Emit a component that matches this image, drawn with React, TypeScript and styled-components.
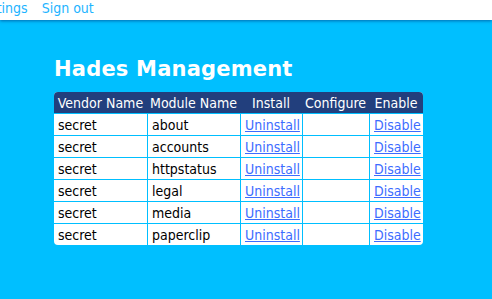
import React from "react";
import styled, { createGlobalStyle } from "styled-components";

const Global = createGlobalStyle`
  html, body { margin: 0; padding: 0; background: #00bfff; }
  body { font-family: "DejaVu Sans Condensed", "DejaVu Sans", sans-serif; overflow: hidden; }
`;

const TopBar = styled.nav`
  height: 20px;
  background: #ffffff;
  box-shadow: 0 1px 3px rgba(0, 70, 140, 0.7);
  display: flex;
  align-items: center;
  gap: 14px;
  overflow: hidden;
  position: relative;
`;

const NavLink = styled.a<{ $shift?: number }>`
  font-size: 14px;
  color: #1eb4ff;
  text-decoration: none;
  white-space: nowrap;
  margin-left: ${(p) => (p.$shift ? `${p.$shift}px` : "0")};
  line-height: 14px;
  margin-top: -4px;
`;

const Main = styled.main`
  padding: 36px 0 0 54px;
`;

const Title = styled.h1`
  margin: 0 0 10px 0;
  font-family: "DejaVu Sans", sans-serif;
  font-weight: bold;
  font-size: 21px;
  letter-spacing: 0.2px;
  line-height: 26px;
  color: #ffffff;
`;

const Table = styled.table`
  border-collapse: separate;
  border-spacing: 0;
  background: #ffffff;
  border-radius: 4px;
  overflow: hidden;
  font-size: 14px;
  width: 369px;
  table-layout: fixed;
`;

const Th = styled.th<{ $w: number }>`
  width: ${(p) => p.$w}px;
  background: #223f7d;
  color: #ffffff;
  font-weight: normal;
  height: 21px;
  padding: 0;
  text-align: center;
  white-space: nowrap;
`;

const Td = styled.td`
  height: 21px;
  padding: 0 4px;
  color: #000000;
  border-top: 1px solid rgb(0, 191, 255);
  border-left: 1px solid rgb(0, 191, 255);
  white-space: nowrap;
  &:first-child { border-left: none; }
`;

const Link = styled.a`
  color: #3c6cff;
  text-decoration: underline;
`;

const modules = ["about", "accounts", "httpstatus", "legal", "media", "paperclip"];

export default function App() {
  return (
    <>
      <Global />
      <TopBar>
        <NavLink $shift={-24}>Settings</NavLink>
        <NavLink>Sign out</NavLink>
      </TopBar>
      <Main>
        <Title>Hades Management</Title>
        <Table>
          <thead>
            <tr>
              <Th $w={93}>Vendor Name</Th>
              <Th $w={93}>Module Name</Th>
              <Th $w={62}>Install</Th>
              <Th $w={67}>Configure</Th>
              <Th $w={54}>Enable</Th>
            </tr>
          </thead>
          <tbody>
            {modules.map((m) => (
              <tr key={m}>
                <Td>secret</Td>
                <Td>{m}</Td>
                <Td><Link href="#">Uninstall</Link></Td>
                <Td></Td>
                <Td><Link href="#">Disable</Link></Td>
              </tr>
            ))}
          </tbody>
        </Table>
      </Main>
    </>
  );
}
